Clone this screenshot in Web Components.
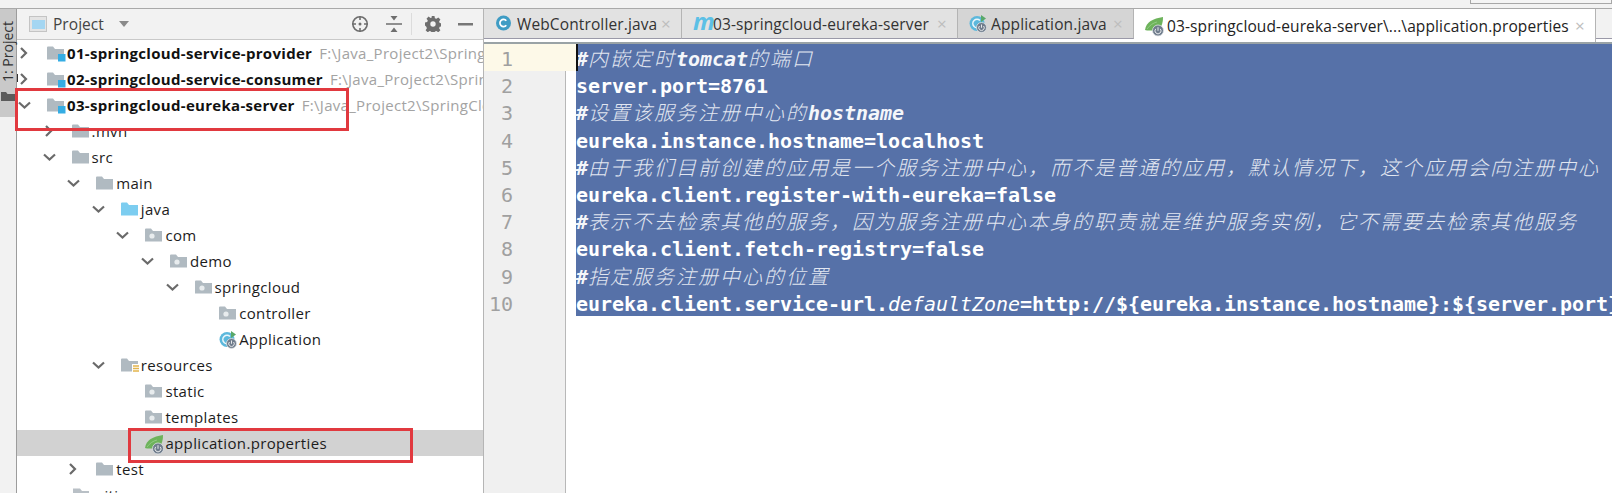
<!DOCTYPE html>
<html>
<head>
<meta charset="utf-8">
<style>
  html, body { margin: 0; padding: 0; background: #fff; overflow: hidden; }
</style>
</head>
<body>
<ide-app>
  <project-panel slot="panel">
    <tree-row level="0" arrow="right" icon="module" bold path="F:\Java_Project2\SpringCloud\01-springcloud-service-provider">01-springcloud-service-provider</tree-row>
    <tree-row level="0" arrow="right" icon="module" bold path="F:\Java_Project2\SpringCloud\02-springcloud-service-consumer">02-springcloud-service-consumer</tree-row>
    <tree-row level="0" arrow="down" icon="module" bold path="F:\Java_Project2\SpringCloud\03-springcloud-eureka-server">03-springcloud-eureka-server</tree-row>
    <tree-row level="1" arrow="right" icon="folder">.mvn</tree-row>
    <tree-row level="1" arrow="down" icon="folder">src</tree-row>
    <tree-row level="2" arrow="down" icon="folder">main</tree-row>
    <tree-row level="3" arrow="down" icon="source">java</tree-row>
    <tree-row level="4" arrow="down" icon="package">com</tree-row>
    <tree-row level="5" arrow="down" icon="package">demo</tree-row>
    <tree-row level="6" arrow="down" icon="package">springcloud</tree-row>
    <tree-row level="7" icon="package">controller</tree-row>
    <tree-row level="7" icon="app">Application</tree-row>
    <tree-row level="3" arrow="down" icon="resources">resources</tree-row>
    <tree-row level="4" icon="package">static</tree-row>
    <tree-row level="4" icon="package">templates</tree-row>
    <tree-row level="4" icon="leaf" selected>application.properties</tree-row>
    <tree-row level="2" arrow="right" icon="folder">test</tree-row>
    <tree-row level="1" icon="file">.gitignore</tree-row>
  </project-panel>
  <editor-pane slot="editor">
    <editor-tab slot="tabs" icon="class" width="198">WebController.java</editor-tab>
    <editor-tab slot="tabs" icon="maven" width="276">03-springcloud-eureka-server</editor-tab>
    <editor-tab slot="tabs" icon="app" width="176" style="--tab-bg:#d5d5d5">Application.java</editor-tab>
    <editor-tab slot="tabs" icon="leaf" width="462" active>03-springcloud-eureka-server\...\application.properties</editor-tab>
    <code-line num="1" comment current>#<cjk-text>内嵌定时</cjk-text>tomcat<cjk-text>的端口</cjk-text></code-line>
    <code-line num="2">server.port=8761</code-line>
    <code-line num="3" comment>#<cjk-text>设置该服务注册中心的</cjk-text>hostname</code-line>
    <code-line num="4">eureka.instance.hostname=localhost</code-line>
    <code-line num="5" comment>#<cjk-text>由于我们目前创建的应用是一个服务注册中心，而不是普通的应用，默认情况下，这个应用会向注册中心</cjk-text></code-line>
    <code-line num="6">eureka.client.register-with-eureka=false</code-line>
    <code-line num="7" comment>#<cjk-text>表示不去检索其他的服务，因为服务注册中心本身的职责就是维护服务实例，它不需要去检索其他服务</cjk-text></code-line>
    <code-line num="8">eureka.client.fetch-registry=false</code-line>
    <code-line num="9" comment>#<cjk-text>指定服务注册中心的位置</cjk-text></code-line>
    <code-line num="10">eureka.client.service-url.<code-key>defaultZone</code-key>=http://${eureka.instance.hostname}:${server.port}</code-line>
  </editor-pane>
  <red-box slot="marks" style="left:15px;top:88px;width:334px;height:43px"></red-box>
  <red-box slot="marks" style="left:128px;top:428px;width:285px;height:35px"></red-box>
</ide-app>

<script>
// every small picture used by the tree and the tabs
const POWER = (cx, cy, r) => `
  <circle cx="${cx}" cy="${cy}" r="${r}" fill="#6f7c8c" stroke="#dfe3e6" stroke-width=".8"/>
  <path d="M${cx - r * .42} ${cy - r * .3}a${r * .55} ${r * .55} 0 1 0 ${r * .84} 0" fill="none" stroke="#e8eaec" stroke-width="1"/>
  <path d="M${cx} ${cy - r * .6}v${r * .65}" stroke="#e8eaec" stroke-width="1"/>`;
const FOLDER = (c) => `<path d="M0 2.5a1 1 0 0 1 1-1h5l2 2.5h9v10.500H0z" fill="${c}"/>`;
const ICONS = {
  folder: FOLDER("#b0bac1"),
  file: `<path d="M1 1.500h7l2 2.500h7v10.500H1z" fill="#b9c0c6"/>`,
  source: FOLDER("#7ccdf0"),
  module: FOLDER("#b0bac1") + `<rect x="11" y="9" width="7.500" height="7.500" fill="#35ade4"/>`,
  package: FOLDER("#b0bac1") + `<circle cx="7" cy="9" r="2.600" fill="#e8ecee"/>`,
  resources: FOLDER("#b0bac1") + `<rect x="11" y="7" width="7" height="9" fill="#fff"/><path d="M12 9h6M12 11.500h6M12 14h6" stroke="#e3b54c" stroke-width="1.400"/>`,
  leaf: `<path d="M0 13C1 5 8 1.500 18 0c0 7-2 11-6 13.500H2z" fill="#6db35b"/><path d="M2 12C5 8 8 6 12 5" stroke="#9bcf8d" stroke-width=".8" fill="none"/>` + POWER(13, 13.500, 5.500),
  app: `<circle cx="8" cy="8.500" r="7.500" fill="#5cb8dc"/><path d="M11 5.500a4.200 4.200 0 1 0 0 6" fill="none" stroke="#eaf6fb" stroke-width="1.600"/><path d="M12 0l5 3.500-5 3.500z" fill="#59a869"/>` + POWER(12.500, 12.500, 5),
  class: `<circle cx="8.500" cy="8" r="7.500" fill="#3f9cc4"/><path d="M11.300 5.700a3.600 3.600 0 1 0 0 4.600" fill="none" stroke="#fff" stroke-width="1.700"/>`,
};

class IdeApp extends HTMLElement {
  constructor() {
    super();
    this.attachShadow({ mode: "open" });
    this.shadowRoot.innerHTML = `
      <style>
        :host { display: flex; flex-direction: column; position: relative; width: 1612px; height: 493px; overflow: hidden; background: #fff; }
        .top { height: 8px; flex: none; background: #f2f2f2; border-bottom: 1px solid #a9a9a9; position: relative; }
        .top i { position: absolute; left: 1470px; right: 0; top: 0; height: 3px; border: 1px solid #a7a7a7; border-top: 0; background: #f4f4f4; }
        .body { flex: 1; display: flex; min-height: 0; }
      </style>
      <div class="top"><i></i></div>
      <div class="body">
        <tool-stripe></tool-stripe>
        <slot name="panel"></slot>
        <slot name="editor"></slot>
      </div>
      <slot name="marks"></slot>`;
  }
}

class ToolStripe extends HTMLElement {
  constructor() {
    super();
    this.attachShadow({ mode: "open" });
    this.shadowRoot.innerHTML = `
      <style>
        :host { display: block; flex: none; width: 16px; background: #f2f2f2; border-right: 1px solid #9c9c9c; }
        .btn { height: 108px; background: #c9c9c9; display: flex; flex-direction: column; align-items: center; padding-top: 12px; box-sizing: border-box; }
        span { writing-mode: vertical-rl; transform: rotate(180deg); font: 14px "Open Sans", sans-serif; color: #333; line-height: 16px; white-space: nowrap; }
        span u { text-underline-offset: 2px; }
        svg { margin-top: 9px; }
      </style>
      <div class="btn">
        <span><u>1</u>: Project</span>
        <svg width="14" height="10" viewBox="0 0 14 10"><path d="M0 1h5l1.500 2H14v7H0z" fill="#5b5b5b"/></svg>
      </div>`;
  }
}

class ProjectPanel extends HTMLElement {
  constructor() {
    super();
    this.attachShadow({ mode: "open" });
    this.shadowRoot.innerHTML = `
      <style>
        :host { display: flex; flex-direction: column; flex: none; width: 466px; background: #fff; overflow: hidden; }
        .head { height: 30px; flex: none; display: flex; align-items: center; background: #f2f2f2; border-bottom: 1px solid #c9c9c9; font: 15.5px "Open Sans", sans-serif; color: #444; letter-spacing: .05px; }
        .grow { flex: 1; }
        svg { display: block; flex: none; }
        .sep { width: 1px; height: 22px; background: #dcdcdc; }
      </style>
      <div class="head">
        <svg style="margin-left:12px" width="18" height="16" viewBox="0 0 18 16"><rect x=".5" y=".5" width="17" height="15" fill="#e4e4e4" stroke="#c4c4c4"/><rect x="3" y="4" width="13" height="9" fill="#a4d6f2"/></svg>
        <span style="margin-left:6px">Project</span>
        <svg style="margin-left:15px" width="10" height="6" viewBox="0 0 10 6"><path d="M0 0h10L5 6z" fill="#8a8a8a"/></svg>
        <span class="grow"></span>
        <svg width="18" height="18" viewBox="0 0 18 18" fill="none" stroke="#6e6e6e" stroke-width="1.600"><circle cx="9" cy="9" r="7.200"/><circle cx="9" cy="9" r="1.500" fill="#6e6e6e" stroke="none"/><path d="M9 1v4M9 13v4M1 9h4M13 9h4"/></svg>
        <svg style="margin-left:17px" width="16" height="16" viewBox="0 0 16 16"><path d="M0 8h16" stroke="#6e6e6e" stroke-width="1.500"/><path d="M4.500 0h7L8 4.500zM4.500 16h7L8 11.500z" fill="#6e6e6e"/></svg>
        <span class="sep" style="margin-left:9px"></span>
        <svg style="margin-left:13px" width="16" height="16" viewBox="0 0 16 16"><path d="M6.500 0h3l.4 2.200 1.500.6 1.900-1.300 2.100 2.100-1.300 1.900.6 1.500 2.300.4v3l-2.300.4-.6 1.500 1.300 1.900-2.100 2.100-1.900-1.300-1.500.6-.4 2.300h-3l-.4-2.300-1.500-.6-1.900 1.300-2.100-2.100 1.300-1.900-.6-1.500L0 9.500v-3l2.200-.4.6-1.500-1.300-1.900 2.100-2.100 1.900 1.300 1.500-.6z" fill="#6e6e6e"/><circle cx="8" cy="8" r="2.700" fill="#f2f2f2"/></svg>
        <svg style="margin-left:17px;margin-right:10px" width="15" height="3" viewBox="0 0 15 3"><path d="M0 0h15v2.500H0z" fill="#777"/></svg>
      </div>
      <div class="tree"><slot></slot></div>`;
  }
}

class TreeRow extends HTMLElement {
  constructor() {
    super();
    this.attachShadow({ mode: "open" });
  }
  connectedCallback() {
    const level = Number(this.getAttribute("level") || 0);
    const arrow = this.getAttribute("arrow");
    const path = this.getAttribute("path");
    const chevrons = {
      right: `<path d="M3 2l5 5-5 5" />`,
      down: `<path d="M1 4.500l5.500 5 5.500-5" />`,
    };
    this.shadowRoot.innerHTML = `
      <style>
        :host { display: flex; align-items: center; height: 26px; white-space: nowrap; font: 15px "Open Sans", sans-serif; color: #1c1c1c; letter-spacing: .35px; }
        :host([selected]) { background: #d2d2d2; }
        :host([bold]) { font-weight: 700; color: #111; letter-spacing: .3px; }
        .arrow { width: 16px; height: 14px; margin-right: 14px; flex: none; fill: none; stroke: #6a6a6a; stroke-width: 2.200; }
        .icon { width: 19px; height: 17px; margin-right: 1px; flex: none; overflow: visible; }
        .path { margin-left: 7px; font-weight: 400; color: #a3a3a3; letter-spacing: .3px; }
      </style>
      <svg class="arrow" viewBox="0 0 14 14">${chevrons[arrow] || ""}</svg>
      <svg class="icon" viewBox="0 0 19 17">${ICONS[this.getAttribute("icon")] || ""}</svg>
      <slot></slot>
      ${path ? `<span class="path">${path}</span>` : ""}`;
    this.style.paddingLeft = level * 24.6 + "px";
  }
}

class EditorPane extends HTMLElement {
  constructor() {
    super();
    this.attachShadow({ mode: "open" });
    this.shadowRoot.innerHTML = `
      <style>
        :host { display: flex; flex-direction: column; flex: 1; min-width: 0; background: #fff; border-left: 1px solid #b5b5b5; overflow: hidden; position: relative; }
        .tabs { height: 30px; flex: none; display: flex; background: #f2f2f2; box-sizing: border-box; border-bottom: 1px solid #9a99a8; }
        .rule { height: 3px; flex: none; }
        .line { height: 2px; flex: none; background: #9aa3a6; }
        .code { flex: 1; display: flex; flex-direction: column; background: linear-gradient(to right, #f0f0f0 81px, #b8b8b8 81px, #b8b8b8 82px, #fff 82px); }
      </style>
      <div class="tabs"><slot name="tabs"></slot></div>
      <div class="rule"></div>
      <div class="line"></div>
      <div class="code"><slot></slot></div>`;
  }
}

class EditorTab extends HTMLElement {
  constructor() {
    super();
    this.attachShadow({ mode: "open" });
  }
  connectedCallback() {
    const icon = this.getAttribute("icon");
    this.style.width = this.getAttribute("width") + "px";
    const picture = icon === "maven"
      ? `<span class="m">m</span>`
      : `<svg viewBox="0 0 19 17">${ICONS[icon]}</svg>`;
    this.shadowRoot.innerHTML = `
      <style>
        :host { display: flex; align-items: center; flex: none; height: 30px; box-sizing: border-box; background: var(--tab-bg, #e2e2e2); border-right: 1px solid #b4b4b4; border-bottom: 1px solid #9a99a8; font: 15.5px "Open Sans", sans-serif; color: #333; letter-spacing: .12px; white-space: nowrap; padding-left: 11px; }
        :host([active]) { background: #fff; border-bottom: 0; height: 33px; color: #222; }
        svg { width: 19px; height: 17px; flex: none; margin-right: 3px; overflow: visible; }
        .m { width: 20px; flex: none; font: italic 700 24px/20px "Open Sans", sans-serif; color: #5cc0e6; letter-spacing: 0; margin-top: -6px; }
        .text { flex: 1; overflow: hidden; }
        .x { width: 20px; flex: none; font: 17px "Open Sans", sans-serif; color: #bdbdbd; }
      </style>
      ${picture}
      <span class="text"><slot></slot></span>
      <span class="x">×</span>`;
  }
}

class CodeLine extends HTMLElement {
  constructor() {
    super();
    this.attachShadow({ mode: "open" });
  }
  connectedCallback() {
    this.shadowRoot.innerHTML = `
      <style>
        :host { display: flex; height: 27.2px; flex: none; white-space: nowrap; font: 700 20px/27.2px "DejaVu Sans Mono", monospace; letter-spacing: -.04px; color: #fff; }
        :host([comment]) { font-style: italic; color: #f4f6fa; }
        .num { width: 29px; flex: none; padding-top: 2px; text-align: right; font-weight: 400; font-style: normal; color: #a0a0a0; }
        :host([current]) .gutter { background: #fdf9e8; }
        .gutter { width: 92px; flex: none; display: flex; }
        .sel { flex: 1; background: #5671a8; position: relative; padding-top: 2px; box-sizing: border-box; min-width: 0; }
        .caret { position: absolute; left: 0; top: 0; bottom: 0; width: 2px; background: #111; display: none; }
        :host([current]) .caret { display: block; }
      </style>
      <div class="gutter"><span class="num">${this.getAttribute("num")}</span></div>
      <div class="sel"><i class="caret"></i><slot></slot></div>`;
  }
}

// chinese glyphs sit on a wider pitch than the mono latin, as in the editor's fallback font
// no whitespace around the slot: it would show up as a space inside the line
class CjkText extends HTMLElement {
  constructor() {
    super();
    this.attachShadow({ mode: "open" });
    this.shadowRoot.innerHTML = `<style>:host { display: inline; font: italic 300 20px/0 "Noto Sans CJK SC", sans-serif; letter-spacing: 2px; color: #e2e7f1; }</style><slot></slot>`;
  }
}

class CodeKey extends HTMLElement {
  constructor() {
    super();
    this.attachShadow({ mode: "open" });
    this.shadowRoot.innerHTML = `<style>:host { display: inline; font-style: italic; font-weight: 400; }</style><slot></slot>`;
  }
}

class RedBox extends HTMLElement {
  constructor() {
    super();
    this.attachShadow({ mode: "open" });
    this.shadowRoot.innerHTML = `<style>:host { display: block; position: absolute; box-sizing: border-box; border: 3px solid #e1393f; }</style>`;
  }
}

customElements.define("ide-app", IdeApp);
customElements.define("tool-stripe", ToolStripe);
customElements.define("project-panel", ProjectPanel);
customElements.define("tree-row", TreeRow);
customElements.define("editor-pane", EditorPane);
customElements.define("editor-tab", EditorTab);
customElements.define("code-line", CodeLine);
customElements.define("cjk-text", CjkText);
customElements.define("code-key", CodeKey);
customElements.define("red-box", RedBox);
</script>
</body>
</html>
